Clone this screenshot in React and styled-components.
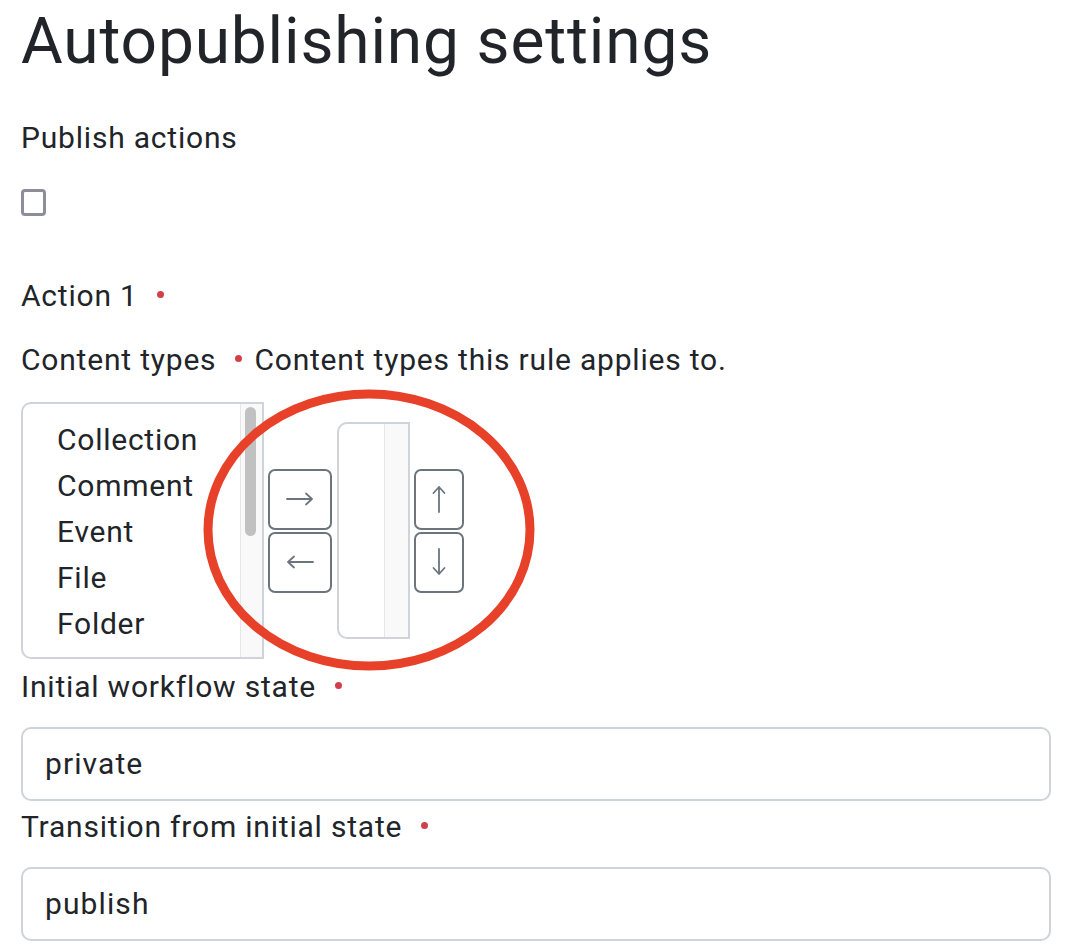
import React from "react";
import styled, { createGlobalStyle } from "styled-components";

const Global = createGlobalStyle`
  html, body { margin: 0; padding: 0; background: #fff; }
  body { font-family: Roboto, "Liberation Sans", sans-serif; color: #212529; }
`;

const Page = styled.div`
  width: 1068px;
  box-sizing: border-box;
  padding: 4px 17px 0 21px;
`;

const Title = styled.h1`
  margin: 0;
  font-size: 64px;
  line-height: 76px;
  font-weight: 400;
  letter-spacing: 0.85px;
`;

const Label = styled.div`
  display: flex;
  align-items: baseline;
  font-size: 30px;
  line-height: 36px;
  letter-spacing: 0.8px;
  margin-top: ${(p) => p.$mt}px;
`;

const Required = styled.span`
  display: inline-block;
  width: 7px;
  height: 7px;
  border-radius: 50%;
  background: #d1404a;
  margin: 0 12px 0 19px;
  position: relative;
  top: -8px;
`;

const Checkbox = styled.div`
  width: 25px;
  height: 27px;
  box-sizing: border-box;
  border: 3px solid #8e8e99;
  border-radius: 4px;
  margin-top: ${(p) => p.$mt}px;
`;

const OrderRow = styled.div`
  position: relative;
  display: flex;
  align-items: center;
  margin-top: 24px;
  height: 257px;
`;

const ListBox = styled.div`
  display: flex;
  box-sizing: border-box;
  width: ${(p) => p.$w}px;
  height: ${(p) => p.$h}px;
  border: 2px solid #ced4da;
  border-radius: 10px 0 0 10px;
  overflow: hidden;
  margin-left: ${(p) => p.$ml || 0}px;
`;

const Items = styled.div`
  flex: 1;
  padding: 13px 0 0 34px;
  overflow: hidden;
`;

const Item = styled.div`
  font-size: 30px;
  line-height: 46px;
  letter-spacing: 0.75px;
  white-space: nowrap;
`;

const Track = styled.div`
  position: relative;
  width: ${(p) => p.$w}px;
  background: #f9f9f9;
  border-left: 1px solid #e6e6e6;
`;

const Thumb = styled.div`
  position: absolute;
  left: 4px;
  top: 3px;
  width: 11px;
  height: 129px;
  border-radius: 6px;
  background: #c1c1c1;
`;

const ButtonStack = styled.div`
  display: flex;
  flex-direction: column;
  gap: 2px;
  margin-left: ${(p) => p.$ml}px;
`;

const ArrowButton = styled.button`
  width: ${(p) => p.$w}px;
  height: 61px;
  box-sizing: border-box;
  border: 2px solid #6c757d;
  border-radius: 7px;
  background: #fff;
  display: flex;
  align-items: center;
  justify-content: center;
  padding: 0;
  color: #6c757d;
`;

const Ellipse = styled.svg`
  position: absolute;
  left: 182px;
  top: -13px;
  pointer-events: none;
`;

const Input = styled.div`
  box-sizing: border-box;
  height: 74px;
  margin-top: 22px;
  border: 2px solid #ced4da;
  border-radius: 10px;
  padding: 0 22px;
  display: flex;
  align-items: center;
  font-size: 30px;
  line-height: 36px;
  letter-spacing: 1.1px;
`;

const Arrow = ({ dir }) => {
  const rot = { right: 0, left: 180, up: -90, down: 90 }[dir];
  return (
    <svg width="30" height="30" viewBox="0 0 30 30" style={{ transform: `rotate(${rot}deg)` }}>
      <path d="M2 15 H27 M21 9.5 L27 15 L21 20.5" fill="none" stroke="#6c757d" strokeWidth="1.8" strokeLinecap="round" strokeLinejoin="round" />
    </svg>
  );
};

export default function App() {
  return (
    <>
      <Global />
      <Page>
        <Title>Autopublishing settings</Title>
        <Label $mt={40}>Publish actions</Label>
        <Checkbox $mt={33} />
        <Label $mt={62}>
          Action 1<Required />
        </Label>
        <Label $mt={28}>
          Content types<Required />Content types this rule applies to.
        </Label>
        <OrderRow>
          <ListBox $w={243} $h={257}>
            <Items>
              {["Collection", "Comment", "Event", "File", "Folder", "Image"].map((t) => (
                <Item key={t}>{t}</Item>
              ))}
            </Items>
            <Track $w={21}>
              <Thumb />
            </Track>
          </ListBox>
          <ButtonStack $ml={4}>
            <ArrowButton $w={64}><Arrow dir="right" /></ArrowButton>
            <ArrowButton $w={64}><Arrow dir="left" /></ArrowButton>
          </ButtonStack>
          <ListBox $w={73} $h={217} $ml={5}>
            <Items />
            <Track $w={23} />
          </ListBox>
          <ButtonStack $ml={4}>
            <ArrowButton $w={50}><Arrow dir="up" /></ArrowButton>
            <ArrowButton $w={50}><Arrow dir="down" /></ArrowButton>
          </ButtonStack>
          <Ellipse width="332" height="282" viewBox="0 0 332 282">
            <ellipse cx="166" cy="141" rx="161" ry="136" fill="none" stroke="#e8412a" strokeWidth="9" />
          </Ellipse>
        </OrderRow>
        <Label $mt={10}>
          Initial workflow state<Required />
        </Label>
        <Input>private</Input>
        <Label $mt={8}>
          Transition from initial state<Required />
        </Label>
        <Input>publish</Input>
      </Page>
    </>
  );
}
